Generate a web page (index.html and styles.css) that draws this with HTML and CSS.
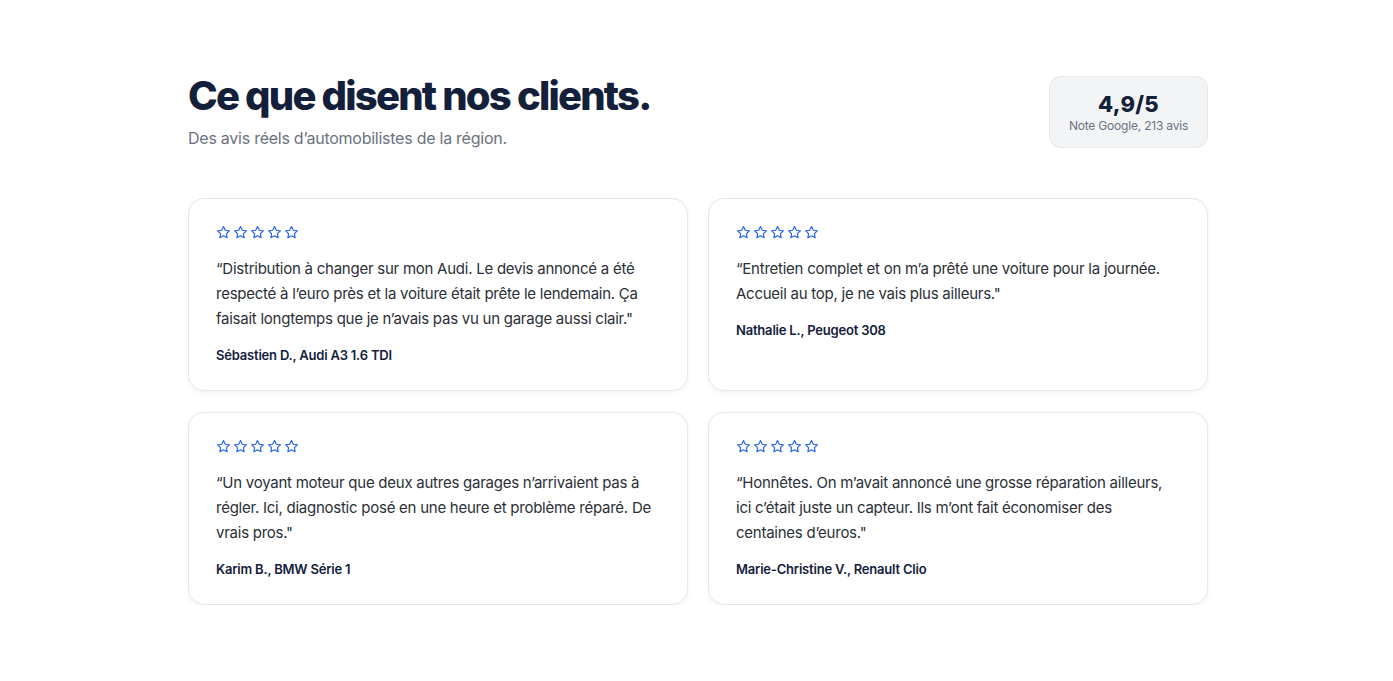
FILE: index.html
```html
<!DOCTYPE html>
<html lang="fr">
<head>
  <meta charset="utf-8">
  <title>Avis clients</title>
  <link rel="stylesheet" href="styles.css">
</head>
<body>
  <section class="reviews">
    <header class="reviews-head">
      <div>
        <h2 class="title">Ce que disent nos clients.</h2>
        <p class="subtitle">Des avis réels d’automobilistes de la région.</p>
      </div>
      <div class="score">
        <span class="score-value">4,9/5</span>
        <span class="score-label">Note Google, 213 avis</span>
      </div>
    </header>

    <div class="review-grid">
      <article class="review">
        <div class="stars">
          <svg viewBox="0 0 24 24"><path d="M12 2.5l2.9 5.9 6.5.9-4.7 4.6 1.1 6.5L12 17.3l-5.8 3.1 1.1-6.5-4.7-4.6 6.5-.9z"/></svg>
          <svg viewBox="0 0 24 24"><path d="M12 2.5l2.9 5.9 6.5.9-4.7 4.6 1.1 6.5L12 17.3l-5.8 3.1 1.1-6.5-4.7-4.6 6.5-.9z"/></svg>
          <svg viewBox="0 0 24 24"><path d="M12 2.5l2.9 5.9 6.5.9-4.7 4.6 1.1 6.5L12 17.3l-5.8 3.1 1.1-6.5-4.7-4.6 6.5-.9z"/></svg>
          <svg viewBox="0 0 24 24"><path d="M12 2.5l2.9 5.9 6.5.9-4.7 4.6 1.1 6.5L12 17.3l-5.8 3.1 1.1-6.5-4.7-4.6 6.5-.9z"/></svg>
          <svg viewBox="0 0 24 24"><path d="M12 2.5l2.9 5.9 6.5.9-4.7 4.6 1.1 6.5L12 17.3l-5.8 3.1 1.1-6.5-4.7-4.6 6.5-.9z"/></svg>
        </div>
        <p class="quote">“Distribution à changer sur mon Audi. Le devis annoncé a été respecté à l’euro près et la voiture était prête le lendemain. Ça faisait longtemps que je n’avais pas vu un garage aussi clair."</p>
        <p class="author">Sébastien D., Audi A3 1.6 TDI</p>
      </article>

      <article class="review">
        <div class="stars">
          <svg viewBox="0 0 24 24"><path d="M12 2.5l2.9 5.9 6.5.9-4.7 4.6 1.1 6.5L12 17.3l-5.8 3.1 1.1-6.5-4.7-4.6 6.5-.9z"/></svg>
          <svg viewBox="0 0 24 24"><path d="M12 2.5l2.9 5.9 6.5.9-4.7 4.6 1.1 6.5L12 17.3l-5.8 3.1 1.1-6.5-4.7-4.6 6.5-.9z"/></svg>
          <svg viewBox="0 0 24 24"><path d="M12 2.5l2.9 5.9 6.5.9-4.7 4.6 1.1 6.5L12 17.3l-5.8 3.1 1.1-6.5-4.7-4.6 6.5-.9z"/></svg>
          <svg viewBox="0 0 24 24"><path d="M12 2.5l2.9 5.9 6.5.9-4.7 4.6 1.1 6.5L12 17.3l-5.8 3.1 1.1-6.5-4.7-4.6 6.5-.9z"/></svg>
          <svg viewBox="0 0 24 24"><path d="M12 2.5l2.9 5.9 6.5.9-4.7 4.6 1.1 6.5L12 17.3l-5.8 3.1 1.1-6.5-4.7-4.6 6.5-.9z"/></svg>
        </div>
        <p class="quote">“Entretien complet et on m’a prêté une voiture pour la journée. Accueil au top, je ne vais plus ailleurs."</p>
        <p class="author">Nathalie L., Peugeot 308</p>
      </article>

      <article class="review">
        <div class="stars">
          <svg viewBox="0 0 24 24"><path d="M12 2.5l2.9 5.9 6.5.9-4.7 4.6 1.1 6.5L12 17.3l-5.8 3.1 1.1-6.5-4.7-4.6 6.5-.9z"/></svg>
          <svg viewBox="0 0 24 24"><path d="M12 2.5l2.9 5.9 6.5.9-4.7 4.6 1.1 6.5L12 17.3l-5.8 3.1 1.1-6.5-4.7-4.6 6.5-.9z"/></svg>
          <svg viewBox="0 0 24 24"><path d="M12 2.5l2.9 5.9 6.5.9-4.7 4.6 1.1 6.5L12 17.3l-5.8 3.1 1.1-6.5-4.7-4.6 6.5-.9z"/></svg>
          <svg viewBox="0 0 24 24"><path d="M12 2.5l2.9 5.9 6.5.9-4.7 4.6 1.1 6.5L12 17.3l-5.8 3.1 1.1-6.5-4.7-4.6 6.5-.9z"/></svg>
          <svg viewBox="0 0 24 24"><path d="M12 2.5l2.9 5.9 6.5.9-4.7 4.6 1.1 6.5L12 17.3l-5.8 3.1 1.1-6.5-4.7-4.6 6.5-.9z"/></svg>
        </div>
        <p class="quote">“Un voyant moteur que deux autres garages n’arrivaient pas à régler. Ici, diagnostic posé en une heure et problème réparé. De vrais pros."</p>
        <p class="author">Karim B., BMW Série 1</p>
      </article>

      <article class="review">
        <div class="stars">
          <svg viewBox="0 0 24 24"><path d="M12 2.5l2.9 5.9 6.5.9-4.7 4.6 1.1 6.5L12 17.3l-5.8 3.1 1.1-6.5-4.7-4.6 6.5-.9z"/></svg>
          <svg viewBox="0 0 24 24"><path d="M12 2.5l2.9 5.9 6.5.9-4.7 4.6 1.1 6.5L12 17.3l-5.8 3.1 1.1-6.5-4.7-4.6 6.5-.9z"/></svg>
          <svg viewBox="0 0 24 24"><path d="M12 2.5l2.9 5.9 6.5.9-4.7 4.6 1.1 6.5L12 17.3l-5.8 3.1 1.1-6.5-4.7-4.6 6.5-.9z"/></svg>
          <svg viewBox="0 0 24 24"><path d="M12 2.5l2.9 5.9 6.5.9-4.7 4.6 1.1 6.5L12 17.3l-5.8 3.1 1.1-6.5-4.7-4.6 6.5-.9z"/></svg>
          <svg viewBox="0 0 24 24"><path d="M12 2.5l2.9 5.9 6.5.9-4.7 4.6 1.1 6.5L12 17.3l-5.8 3.1 1.1-6.5-4.7-4.6 6.5-.9z"/></svg>
        </div>
        <p class="quote">“Honnêtes. On m’avait annoncé une grosse réparation ailleurs, ici c’était juste un capteur. Ils m’ont fait économiser des centaines d’euros."</p>
        <p class="author">Marie-Christine V., Renault Clio</p>
      </article>
    </div>
  </section>
</body>
</html>
```

FILE: styles.css
```css
:root {
  --ink: #14203a;
  --muted: #6b7280;
  --text: #2b2f36;
  --border: #e5e7eb;
  --surface: #f3f4f6;
  --star: #2563eb;
}

body {
  margin: 0;
  padding-left: 3px;
  background: #ffffff;
  font-family: 'Inter', 'Noto Sans', sans-serif;
  color: var(--text);
}

.reviews {
  width: 1020px;
  margin: 0 auto;
  padding: 76px 0 0;
}

.reviews-head {
  display: flex;
  justify-content: space-between;
  align-items: flex-start;
  margin-bottom: 50px;
}

.title {
  margin: 0;
  font-size: 40px;
  line-height: 40px;
  font-weight: 800;
  letter-spacing: -1.8px;
  color: var(--ink);
}

.subtitle {
  margin: 12px 0 0;
  font-size: 16px;
  line-height: 20px;
  letter-spacing: -0.25px;
  color: var(--muted);
}

.score {
  display: flex;
  flex-direction: column;
  align-items: center;
  width: 157px;
  padding: 13px 0 13px;
  background: var(--surface);
  border: 1px solid var(--border);
  border-radius: 12px;
}

.score-value {
  font-size: 22px;
  line-height: 28px;
  font-weight: 800;
  letter-spacing: 0.3px;
  color: var(--ink);
}

.score-label {
  font-size: 12px;
  line-height: 16px;
  letter-spacing: -0.2px;
  color: var(--muted);
}

.review-grid {
  display: grid;
  grid-template-columns: 1fr 1fr;
  gap: 21px 20px;
}

.review {
  padding: 26px 27px 25px;
  background: #ffffff;
  border: 1px solid var(--border);
  border-radius: 16px;
  box-shadow: 0 2px 6px rgba(15, 23, 42, 0.05);
}

.stars {
  display: flex;
  gap: 2px;
  height: 15px;
}

.stars svg {
  width: 15px;
  height: 15px;
  fill: none;
  stroke: var(--star);
  stroke-width: 1.9;
  stroke-linejoin: round;
}

.quote {
  margin: 16px 0 0;
  font-size: 15px;
  line-height: 25px;
  letter-spacing: -0.25px;
  color: var(--text);
}

.author {
  margin: 14px 0 0;
  font-size: 13px;
  line-height: 20px;
  font-weight: 600;
  letter-spacing: -0.2px;
  color: var(--ink);
}
```
